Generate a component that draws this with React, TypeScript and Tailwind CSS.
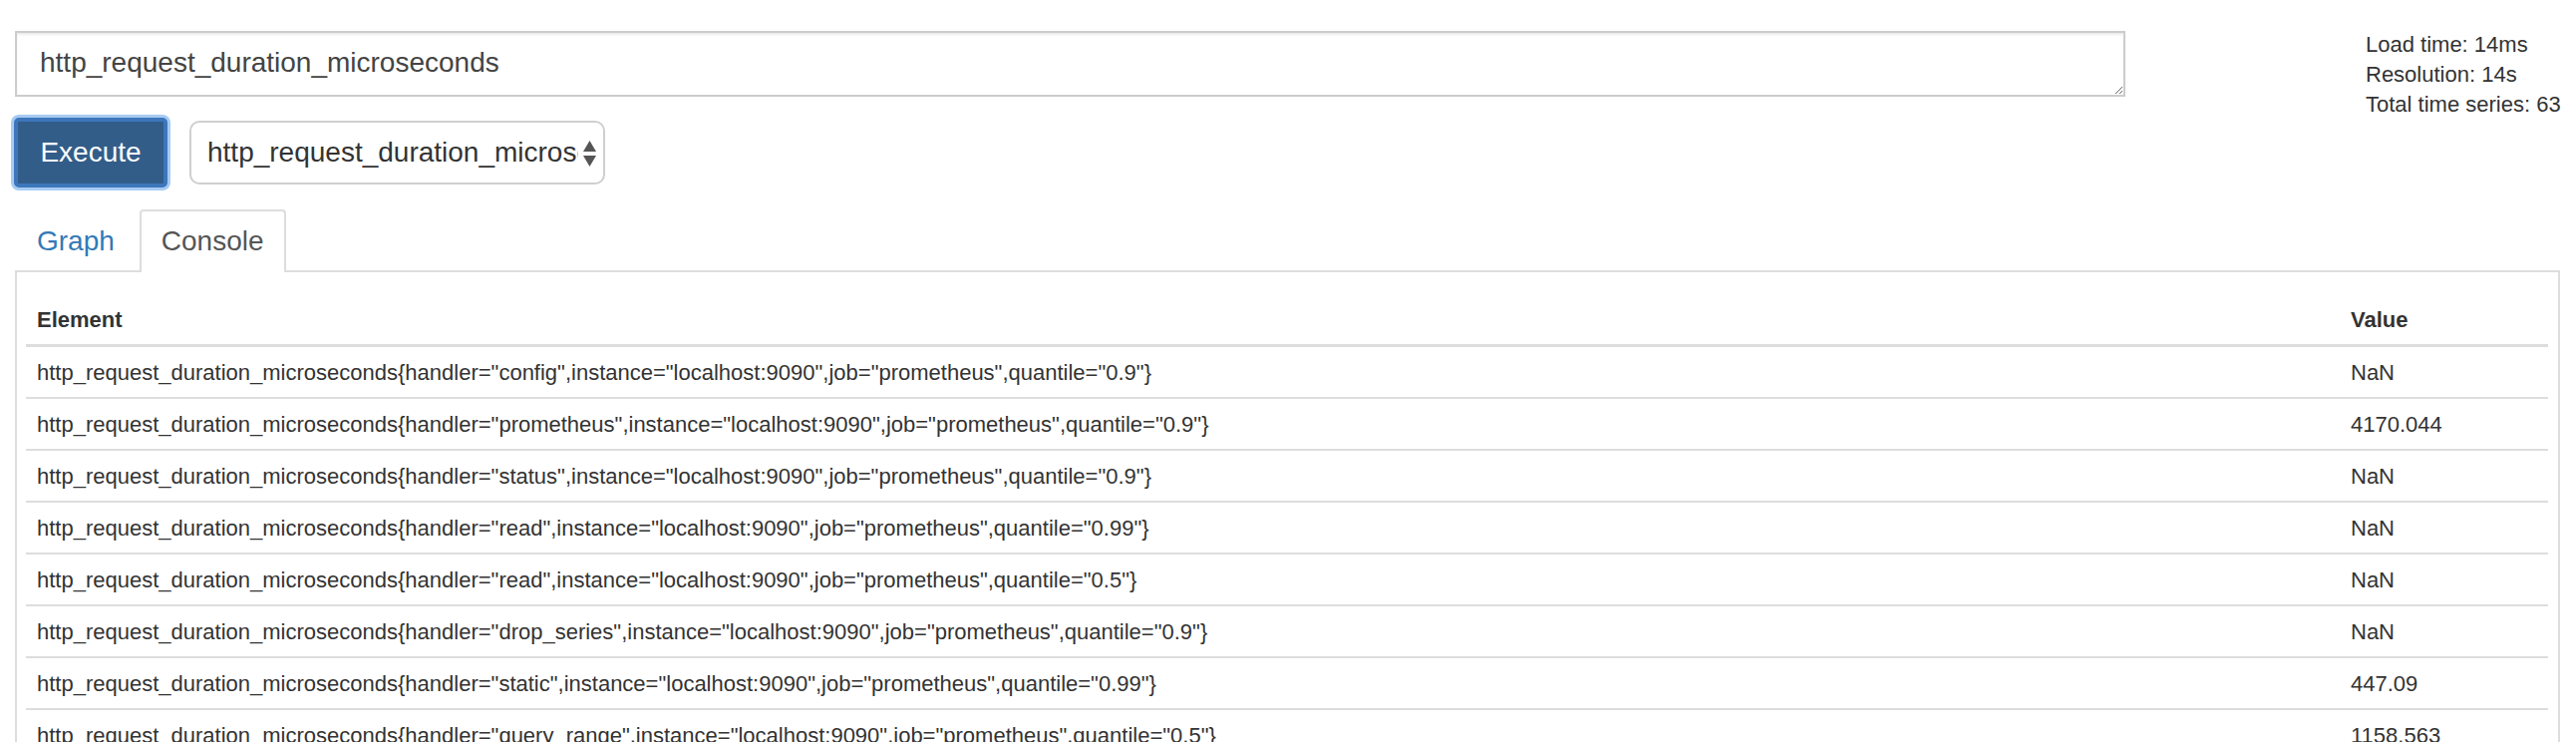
import React from "react";

const rows: [string, string, string][] = [
  ["config", "0.9", "NaN"],
  ["prometheus", "0.9", "4170.044"],
  ["status", "0.9", "NaN"],
  ["read", "0.99", "NaN"],
  ["read", "0.5", "NaN"],
  ["drop_series", "0.9", "NaN"],
  ["static", "0.99", "447.09"],
  ["query_range", "0.5", "1158.563"],
  ["query", "0.9", "NaN"],
  ["label_values", "0.5", "NaN"],
];

export default function App() {
  return (
    <div className="w-full h-[744px] overflow-hidden bg-white text-[#333] font-['Liberation_Sans',Arial,sans-serif]">
      <div className="pl-[15px] pr-[16px] pt-[30px]">
        <div className="flex items-start">
          <div className="flex flex-col w-[2117px]">
            <textarea
              readOnly
              defaultValue="http_request_duration_microseconds"
              className="mt-[1px] w-[2117px] h-[66px] border-2 border-[#ccc] pl-[23px] pt-[10px] pb-[12px] text-[28px] leading-[40px] text-[#444] outline-none shadow-[inset_0_2px_2px_rgba(0,0,0,0.075)] font-['Liberation_Sans',Arial,sans-serif]"
            />
            <div className="mt-[21px] flex items-center">
              <button className="ml-[-1px] w-[154px] h-[70px] rounded-[5px] border-[4px] border-[#3d76bb] bg-[#335d89] text-white text-[28px] leading-[40px] shadow-[0_0_0_3px_#a6cbf3]">
                Execute
              </button>
              <div className="ml-[22px] w-[417px] h-[64px] border-2 border-[#cfcfcf] rounded-[10px] bg-white flex items-center pl-[16px] pr-[7px]">
                <div className="flex-1 overflow-hidden whitespace-nowrap text-[28px] leading-[40px] text-[#333]">
                  http_request_duration_microseconds
                </div>
                <svg width="13" height="26" viewBox="0 0 13 26" className="ml-[5px] mt-[2px]">
                  <polygon points="6.5,0 13,11 0,11" fill="#555" />
                  <polygon points="0,15 13,15 6.5,26" fill="#555" />
                </svg>
              </div>
            </div>
          </div>
          <div className="ml-[241px] text-[22px] leading-[30px] whitespace-nowrap">
            <div>Load time: 14ms</div>
            <div>Resolution: 14s</div>
            <div>Total time series: 63</div>
          </div>
        </div>

        <div className="mt-[22px] flex">
          <div className="relative z-10 mb-[-2px] mr-[3px] border-2 border-transparent px-[20px] pt-[10px] pb-[9px] text-[28px] leading-[40px] text-[#337ab7]">
            Graph
          </div>
          <div className="relative z-10 mb-[-2px] border-2 border-b-0 border-[#ddd] rounded-t-[4px] bg-white px-[20px] pt-[10px] pb-[11px] text-[28px] leading-[40px] text-[#555]">
            Console
          </div>
        </div>

        <div className="border-2 border-[#ddd] pl-[9px] pr-[10px] pt-[22px]">
          <div className="flex border-b-[3px] border-[#ddd] font-bold text-[22px] leading-[30px]">
            <div className="flex-1 pl-[11px] pt-[11px] pb-[9px]">Element</div>
            <div className="w-[209px] pl-[11px] pt-[11px] pb-[9px]">Value</div>
          </div>
          {rows.map(([h, q, v], i) => (
            <div key={i} className="flex border-b-2 border-[#ddd] text-[22px] leading-[30px]">
              <div className="flex-1 pl-[11px] pt-[11px] pb-[9px] whitespace-nowrap">
                {`http_request_duration_microseconds{handler="${h}",instance="localhost:9090",job="prometheus",quantile="${q}"}`}
              </div>
              <div className="w-[209px] pl-[11px] pt-[11px] pb-[9px]">{v}</div>
            </div>
          ))}
        </div>
      </div>
    </div>
  );
}
